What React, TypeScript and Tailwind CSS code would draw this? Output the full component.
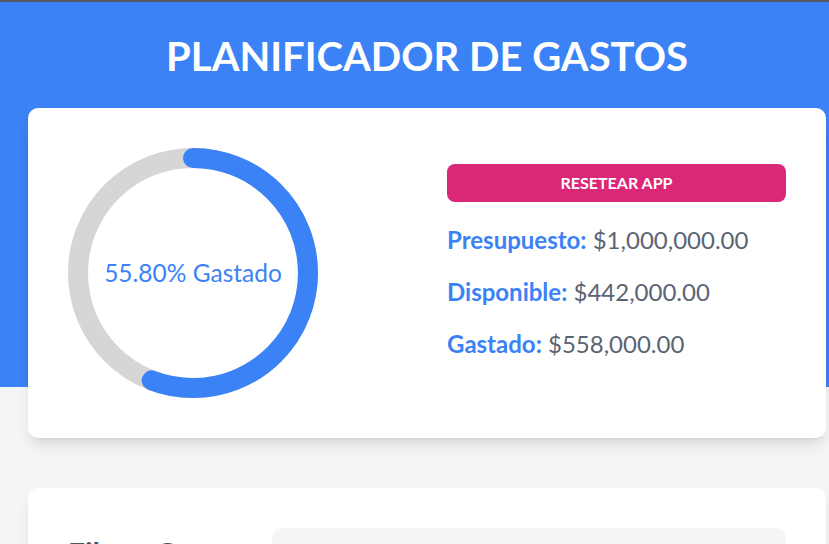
export default function App() {
  const presupuesto = 1000000;
  const gastado = 558000;
  const disponible = presupuesto - gastado;
  const pct = (gastado / presupuesto) * 100;
  const r = 115;
  const circ = 2 * Math.PI * r;

  const fmt = (n: number) =>
    "$" + n.toLocaleString("en-US", { minimumFractionDigits: 2, maximumFractionDigits: 2 });

  return (
    <div
      className="w-full min-h-[544px] overflow-hidden bg-[#f5f5f5] border-t-2 border-[#555a60]"
      style={{ fontFamily: "Lato, 'Open Sans', sans-serif" }}
    >
      <div className="w-[854px]">
        <header className="h-[385px] bg-[#3b82f6] pt-[29px]">
          <h1 className="text-center text-white text-[40px] leading-[50px] font-bold">
            PLANIFICADOR DE GASTOS
          </h1>
        </header>

        <main className="-mt-[279px] px-7 pb-10">
          <div className="bg-white rounded-[10px] shadow-lg p-10 grid grid-cols-2 gap-10">
            <div className="relative w-[250px] h-[250px]">
              <svg width="250" height="250" viewBox="0 0 250 250">
                <circle cx="125" cy="125" r={r} fill="none" stroke="#d6d6d6" strokeWidth="20" />
                <circle
                  cx="125"
                  cy="125"
                  r={r}
                  fill="none"
                  stroke="#3b82f6"
                  strokeWidth="20"
                  strokeLinecap="round"
                  strokeDasharray={`${(pct / 100) * circ} ${circ}`}
                  transform="rotate(-90 125 125)"
                />
              </svg>
              <div className="absolute inset-0 flex items-center justify-center text-[24.5px] text-[#3b82f6]">
                {pct.toFixed(2)}% Gastado
              </div>
            </div>

            <div className="pt-4 flex flex-col">
              <button className="h-[38px] w-full rounded-lg bg-[#db2777] text-white text-[16px] font-bold uppercase">
                Resetear App
              </button>
              <div className="mt-[24px] flex flex-col gap-[24px] text-[24px] leading-[28px] text-[#5b6472]">
                <p>
                  <span className="font-bold text-[#3b82f6]">Presupuesto:</span> {fmt(presupuesto)}
                </p>
                <p>
                  <span className="font-bold text-[#3b82f6]">Disponible:</span> {fmt(disponible)}
                </p>
                <p>
                  <span className="font-bold text-[#3b82f6]">Gastado:</span> {fmt(gastado)}
                </p>
              </div>
            </div>
          </div>

          <div className="mt-[50px] bg-white rounded-[10px] shadow-lg p-10">
            <div className="flex items-center gap-5">
              <label className="w-[184px] text-[30px] font-bold text-[#475569]">Filtrar Gastos</label>
              <div className="flex-1 h-[50px] rounded-[10px] bg-[#f5f5f5]" />
            </div>
          </div>
        </main>
      </div>
    </div>
  );
}
